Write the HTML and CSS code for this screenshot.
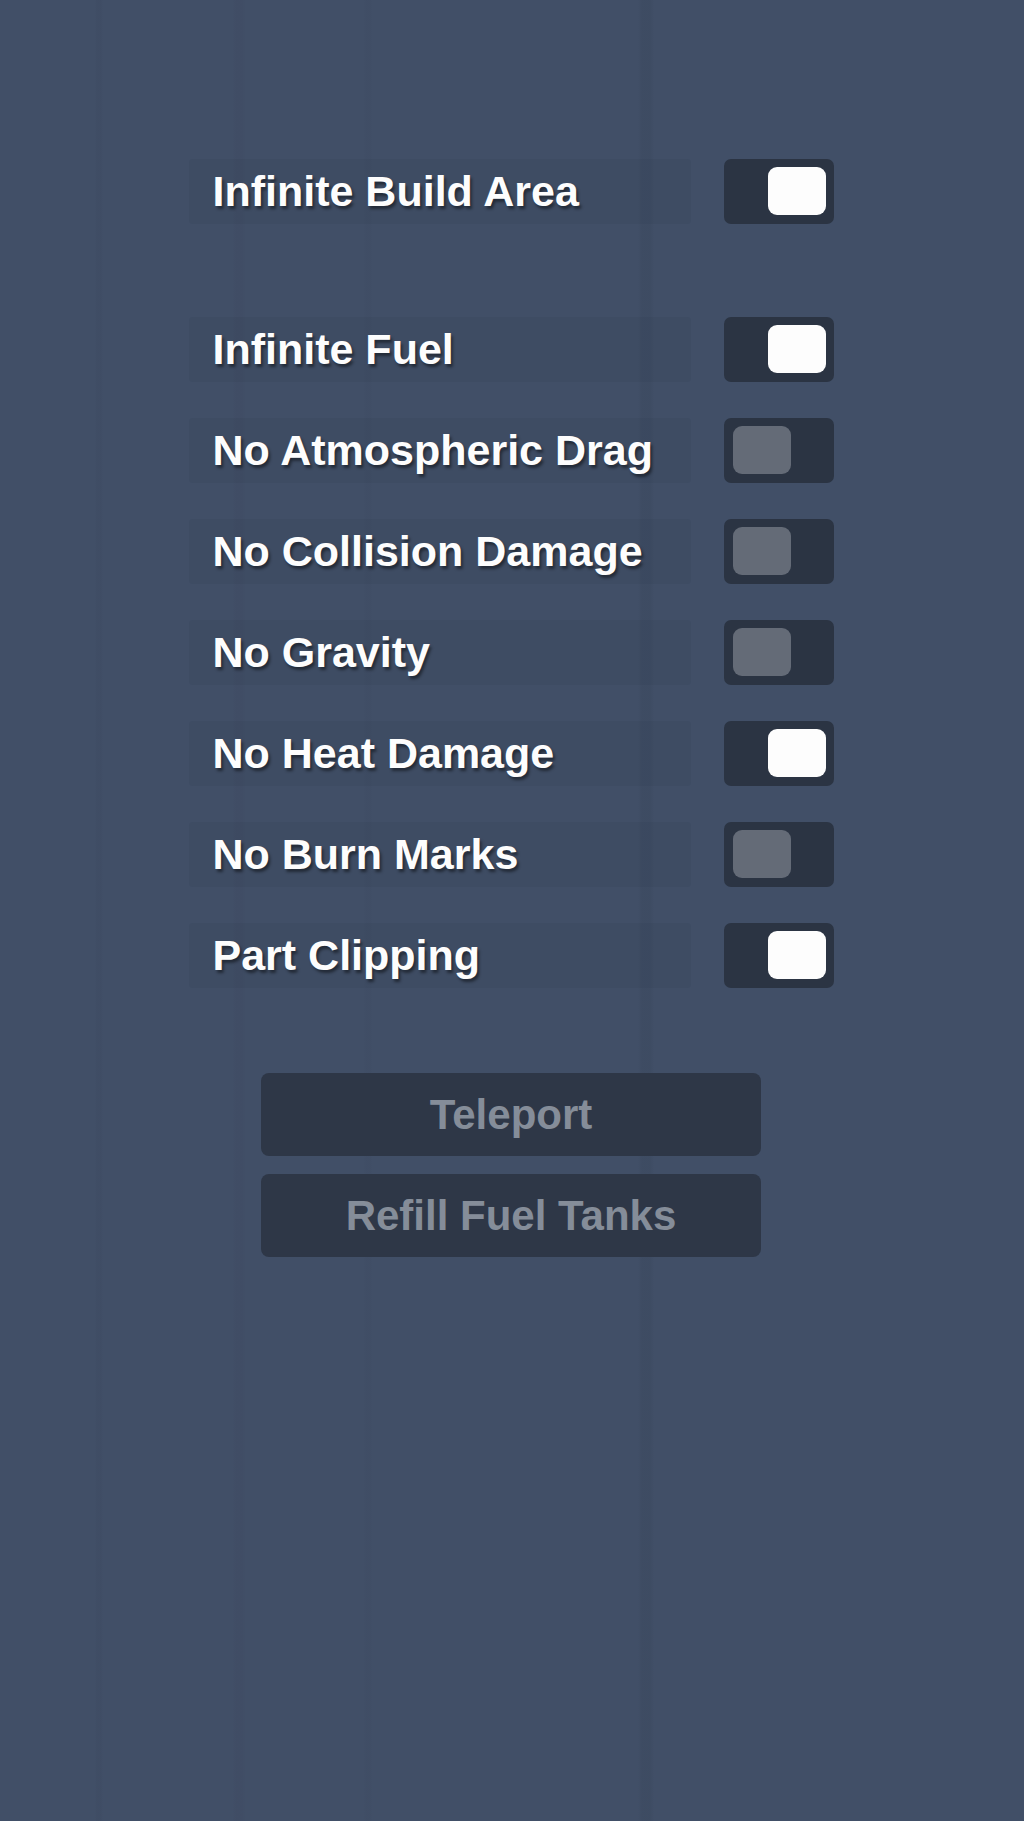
FILE: index.html
```html
<!DOCTYPE html>
<html lang="en">
<head>
    <meta charset="UTF-8">
    <meta name="viewport" content="width=device-width, initial-scale=1.0">
    <title>Cheats</title>
    <link rel="stylesheet" href="styles.css">
</head>
<body>
    <main class="panel">
        <div class="options">
            <div class="option">
                <div class="label">Infinite Build Area</div>
                <div class="toggle on"><span class="knob"></span></div>
            </div>

            <div class="spacer"></div>

            <div class="option">
                <div class="label">Infinite Fuel</div>
                <div class="toggle on"><span class="knob"></span></div>
            </div>
            <div class="option">
                <div class="label">No Atmospheric Drag</div>
                <div class="toggle"><span class="knob"></span></div>
            </div>
            <div class="option">
                <div class="label">No Collision Damage</div>
                <div class="toggle"><span class="knob"></span></div>
            </div>
            <div class="option">
                <div class="label">No Gravity</div>
                <div class="toggle"><span class="knob"></span></div>
            </div>
            <div class="option">
                <div class="label">No Heat Damage</div>
                <div class="toggle on"><span class="knob"></span></div>
            </div>
            <div class="option">
                <div class="label">No Burn Marks</div>
                <div class="toggle"><span class="knob"></span></div>
            </div>
            <div class="option">
                <div class="label">Part Clipping</div>
                <div class="toggle on"><span class="knob"></span></div>
            </div>
        </div>

        <div class="actions">
            <button class="action">Teleport</button>
            <button class="action">Refill Fuel Tanks</button>
        </div>
    </main>
</body>
</html>
```

FILE: styles.css
```css
html, body {
    height: 100%;
}
body {
    margin: 0;
    font-family: "Liberation Sans", Arial, sans-serif;
    background-color: #414f67;
    background-image: linear-gradient(90deg,
        rgba(0,0,0,0) 0px, rgba(0,0,0,0) 95px,
        rgba(20,20,40,0.035) 97px, rgba(20,20,40,0.035) 101px,
        rgba(0,0,0,0) 103px, rgba(0,0,0,0) 232px,
        rgba(40,20,50,0.035) 236px, rgba(40,20,50,0.035) 242px,
        rgba(0,0,0,0) 246px, rgba(0,0,0,0) 363px,
        rgba(20,20,40,0.025) 366px, rgba(20,20,40,0.025) 370px,
        rgba(0,0,0,0) 373px, rgba(0,0,0,0) 638px,
        rgba(20,30,40,0.07) 642px, rgba(20,30,40,0.07) 650px,
        rgba(0,0,0,0) 654px, rgba(0,0,0,0) 1024px);
    color: #fdfdfd;
}
.panel {
    width: 645px;
    margin: 0 auto;
    padding-top: 159px;
    transform: translateX(-1px);
}
.options {
    display: flex;
    flex-direction: column;
    gap: 36px;
}
.spacer {
    height: 21px;
}
.option {
    display: flex;
    align-items: center;
    gap: 33px;
    height: 65px;
}
.label {
    flex: 1;
    height: 65px;
    display: flex;
    align-items: center;
    padding-left: 24px;
    background: rgba(30, 38, 55, 0.07);
    border-radius: 4px;
    font-size: 43px;
    font-weight: bold;
    white-space: nowrap;
    text-shadow: 2px 3px 3px rgba(0, 0, 0, 0.45);
}
.toggle {
    width: 110px;
    height: 65px;
    box-sizing: border-box;
    padding: 8px 8px 9px 9px;
    background: #2b3443;
    border-radius: 7px;
    display: flex;
    justify-content: flex-start;
}
.toggle.on {
    justify-content: flex-end;
}
.knob {
    width: 58px;
    height: 48px;
    background: #646b77;
    border-radius: 9px;
}
.toggle.on .knob {
    background: #fdfdfd;
}
.actions {
    display: flex;
    flex-direction: column;
    align-items: center;
    gap: 18px;
    margin-top: 85px;
}
.action {
    width: 500px;
    height: 83px;
    border: none;
    border-radius: 8px;
    background: #2e3747;
    color: #858d99;
    font-family: "Liberation Sans", Arial, sans-serif;
    font-size: 42px;
    font-weight: bold;
    padding: 0;
}
```
